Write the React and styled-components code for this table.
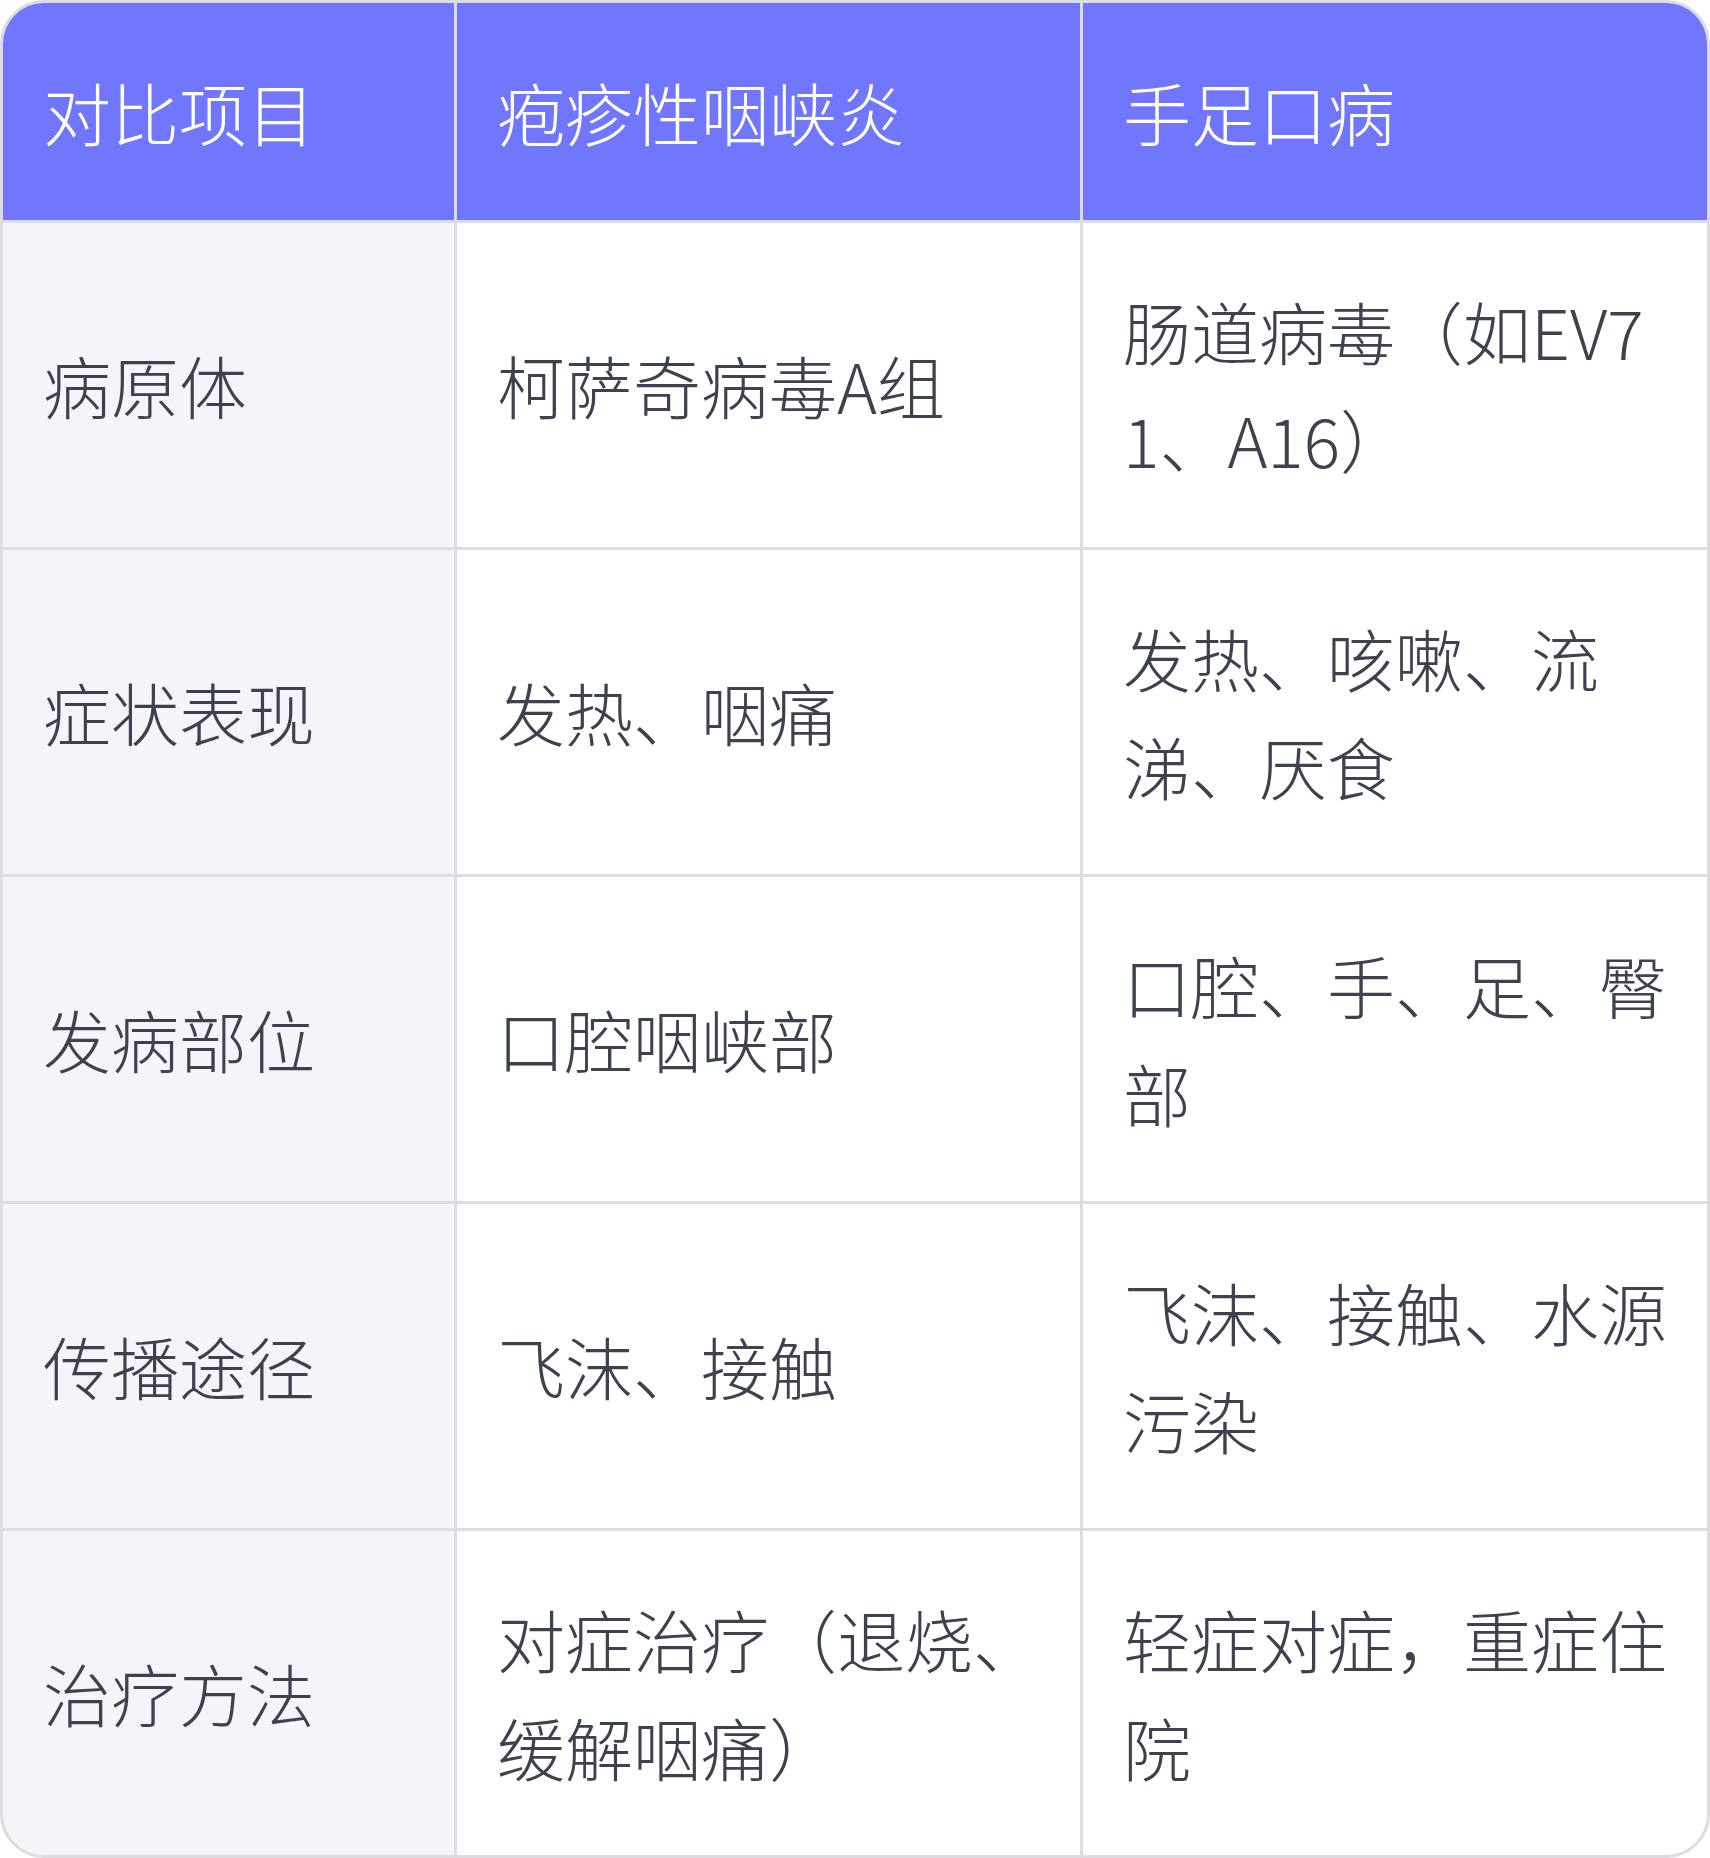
import React from "react";
import styled, { createGlobalStyle } from "styled-components";

const rows = [
  ["病原体", "柯萨奇病毒A组", "肠道病毒（如EV71、A16）"],
  ["症状表现", "发热、咽痛", "发热、咳嗽、流涕、厌食"],
  ["发病部位", "口腔咽峡部", "口腔、手、足、臀部"],
  ["传播途径", "飞沫、接触", "飞沫、接触、水源污染"],
  ["治疗方法", "对症治疗（退烧、缓解咽痛）", "轻症对症，重症住院"],
];

const App = () => {
  return (
    <>
      <Global />
      <Table>
        <Grid>
          <HeadCell>对比项目</HeadCell>
          <HeadCell>疱疹性咽峡炎</HeadCell>
          <HeadCell>手足口病</HeadCell>
          {rows.map((row) =>
            row.map((text, i) => (
              <Cell key={row[0] + i} $label={i === 0}>
                <span>{text}</span>
              </Cell>
            ))
          )}
        </Grid>
      </Table>
    </>
  );
};

const Global = createGlobalStyle`
  body {
    margin: 0;
    background: #ffffff;
    font-family: "Noto Sans CJK SC", "Noto Sans", sans-serif;
  }
`;

const Table = styled.div`
  width: 1710px;
  box-sizing: border-box;
  border: 3px solid #dcdde2;
  border-radius: 44px;
  overflow: hidden;
  background: #dcdde2;
`;

const Grid = styled.div`
  display: grid;
  grid-template-columns: 451px 623px 624px;
  grid-template-rows: 217px repeat(5, 324px);
  gap: 3px;
`;

const HeadCell = styled.div`
  display: flex;
  align-items: center;
  padding: 0 34px 0 40px;
  background: #7176ff;
  color: #ffffff;
  font-size: 68px;
  font-weight: 300;
  line-height: 108px;
`;

const Cell = styled.div`
  display: flex;
  align-items: center;
  padding: 0 34px 0 40px;
  background: ${(p) => (p.$label ? "#f4f5f9" : "#ffffff")};
  color: #3e414e;
  font-size: 68px;
  font-weight: 300;
  line-height: 108px;
  word-break: break-all;
`;

export default App;
